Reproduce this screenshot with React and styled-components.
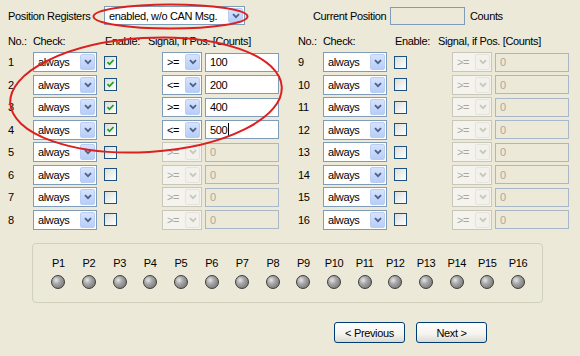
import React from "react";
import styled, { createGlobalStyle, css } from "styled-components";

const Global = createGlobalStyle`
  html, body { margin: 0; padding: 0; background: #ece9d8; }
  body {
    font-family: "Liberation Sans", Arial, sans-serif;
    font-size: 11px;
    letter-spacing: -0.35px;
    color: #000;
  }
`;

const Page = styled.div`
  position: relative;
  width: 580px;
  height: 356px;
  background: #ece9d8;
  overflow: hidden;
`;

const TopBar = styled.div`
  display: flex;
  align-items: center;
  height: 19px;
  padding: 6px 0 0 8px;
`;

const TopLabel = styled.span`
  width: ${(p) => p.$w}px;
  margin-left: ${(p) => p.$ml || 0}px;
  flex: none;
  white-space: nowrap;
`;

const Combo = styled.div`
  position: relative;
  box-sizing: border-box;
  width: ${(p) => p.$w}px;
  height: ${(p) => p.$h || 20}px;
  border: 1px solid ${(p) => (p.$disabled ? "#c9c7ba" : "#7f9db9")};
  background: ${(p) => (p.$disabled ? "#f4f3ee" : "#fff")};
  color: ${(p) => (p.$disabled ? "#aca899" : "#000")};
  display: flex;
  align-items: center;
  padding-left: 4px;
  flex: none;
`;

const DropBtn = styled.div`
  position: absolute;
  top: 1px;
  right: 1px;
  bottom: 1px;
  width: 15px;
  box-sizing: border-box;
  border-radius: 2px;
  display: flex;
  align-items: center;
  justify-content: center;
  ${(p) =>
    p.$disabled
      ? css`
          background: #f2f1eb;
          border: 1px solid #e6e4da;
        `
      : css`
          background: linear-gradient(#d6e3fd, #b7cdf8);
          border: 1px solid #b9cdf5;
        `}
`;

const Chevron = ({ disabled }) => (
  <svg width="8" height="6" viewBox="0 0 8 6">
    <path
      d="M1 1.2 L4 4.2 L7 1.2"
      fill="none"
      stroke={disabled ? "#c9c7ba" : "#4d6185"}
      strokeWidth="1.8"
    />
  </svg>
);

const Select = ({ value, w, h, disabled }) => (
  <Combo $w={w} $h={h} $disabled={disabled}>
    {value}
    <DropBtn $disabled={disabled}>
      <Chevron disabled={disabled} />
    </DropBtn>
  </Combo>
);

const Field = styled.div`
  box-sizing: border-box;
  width: ${(p) => p.$w}px;
  height: ${(p) => p.$h || 19}px;
  border: 1px solid ${(p) => (p.$disabled ? "#a8b8c8" : "#7f9db9")};
  background: ${(p) => (p.$disabled || p.$readonly ? "#ece9d8" : "#fff")};
  color: ${(p) => (p.$disabled ? "#aca899" : "#000")};
  display: flex;
  align-items: center;
  padding-left: 4px;
  flex: none;
`;

const Caret = styled.span`
  display: inline-block;
  width: 1px;
  height: 13px;
  background: #000;
  margin-left: 1px;
`;

const Header = styled.div`
  display: flex;
  margin-top: 10px;
  padding-left: 8px;
  height: 13px;
  line-height: 13px;
`;

const HeadCell = styled.span`
  width: ${(p) => p.$w}px;
  flex: none;
  white-space: nowrap;
`;

const Panels = styled.div`
  display: flex;
  gap: 19px;
  padding-left: 8px;
  margin-top: 4px;
`;

const Panel = styled.div`
  display: grid;
  grid-template-columns: 25px 71px 58px 43px 74px;
  grid-auto-rows: 20px;
  row-gap: 2.5px;
  align-items: center;
`;

const Num = styled.span``;

const Check = styled.div`
  box-sizing: border-box;
  width: 13px;
  height: 13px;
  border: 1px solid #1c5180;
  background: linear-gradient(135deg, #dcdcd7, #fff);
  display: flex;
  align-items: center;
  justify-content: center;
`;

const Tick = () => (
  <svg width="9" height="9" viewBox="0 0 9 9">
    <path d="M1.5 4.2 L3.5 6.3 L7.5 2" fill="none" stroke="#21a121" strokeWidth="1.8" />
  </svg>
);

const Group = styled.div`
  box-sizing: border-box;
  margin: 13.5px 0 0 32px;
  width: 511px;
  height: 60px;
  border: 1px solid #d0d0bf;
  border-radius: 4px;
  padding: 12px 0 0 10px;
  display: grid;
  grid-template-columns: repeat(16, 30.65px);
  grid-template-rows: 13px 14px;
  row-gap: 6px;
  justify-items: center;
  align-items: center;
`;

const Led = styled.div`
  box-sizing: border-box;
  width: 14px;
  height: 14px;
  border-radius: 50%;
  border: 1px solid #3c3c3c;
  background: radial-gradient(circle at 35% 35%, #e6e6e6 0, #a8a8a8 35%, #858585 70%, #666 100%);
`;

const Buttons = styled.div`
  display: flex;
  gap: 11px;
  margin: 19px 0 0 334px;
`;

const Button = styled.button`
  box-sizing: border-box;
  width: 71px;
  height: 21px;
  border: 1px solid #003c74;
  border-radius: 3px;
  background: linear-gradient(#fefefe, #f4f3ee 60%, #dcd9cf);
  font: inherit;
  letter-spacing: inherit;
  color: #000;
  padding: 0;
`;

const Overlay = styled.svg`
  position: absolute;
  left: 0;
  top: 0;
  pointer-events: none;
`;

const leftRows = [
  { n: 1, on: true, op: ">=", v: "100" },
  { n: 2, on: true, op: "<=", v: "200" },
  { n: 3, on: true, op: ">=", v: "400" },
  { n: 4, on: true, op: "<=", v: "500", caret: true },
  { n: 5 },
  { n: 6 },
  { n: 7 },
  { n: 8 },
];
const rightRows = [9, 10, 11, 12, 13, 14, 15, 16].map((n) => ({ n }));

const RegPanel = ({ rows }) => (
  <Panel>
    {rows.map((r) => (
      <React.Fragment key={r.n}>
        <Num>{r.n}</Num>
        <Select value="always" w={64} />
        <Check>{r.on && <Tick />}</Check>
        <Select value={r.op || ">="} w={40} disabled={!r.on} />
        <Field $w={74} $disabled={!r.on}>
          {r.v || "0"}
          {r.caret && <Caret />}
        </Field>
      </React.Fragment>
    ))}
  </Panel>
);

const HeadRow = () => (
  <>
    <HeadCell $w={25}>No.:</HeadCell>
    <HeadCell $w={72}>Check:</HeadCell>
    <HeadCell $w={43}>Enable:</HeadCell>
    <HeadCell $w={150}>Signal, if Pos. [Counts]</HeadCell>
  </>
);

export default function App() {
  return (
    <Page>
      <Global />
      <TopBar>
        <TopLabel $w={96}>Position Registers</TopLabel>
        <Select value="enabled, w/o CAN Msg." w={141} h={19} />
        <TopLabel $w={77} $ml={68}>Current Position</TopLabel>
        <Field $w={75} $h={18} $readonly />
        <TopLabel $w={50} $ml={5}>Counts</TopLabel>
      </TopBar>
      <Header>
        <HeadRow />
        <HeadRow />
      </Header>
      <Panels>
        <RegPanel rows={leftRows} />
        <RegPanel rows={rightRows} />
      </Panels>
      <Group>
        {Array.from({ length: 16 }, (_, i) => (
          <span key={"l" + i}>P{i + 1}</span>
        ))}
        {Array.from({ length: 16 }, (_, i) => (
          <Led key={"d" + i} />
        ))}
      </Group>
      <Buttons>
        <Button>&lt; Previous</Button>
        <Button>Next &gt;</Button>
      </Buttons>
      <Overlay width="580" height="356" viewBox="0 0 580 356">
        <ellipse cx="170.5" cy="16.5" rx="77" ry="12" fill="none" stroke="#dc1f1f" strokeWidth="2" />
        <ellipse
          cx="146"
          cy="95"
          rx="136"
          ry="57"
          transform="rotate(-3.5 146 95)"
          fill="none"
          stroke="#dc1f1f"
          strokeWidth="2"
        />
      </Overlay>
    </Page>
  );
}
